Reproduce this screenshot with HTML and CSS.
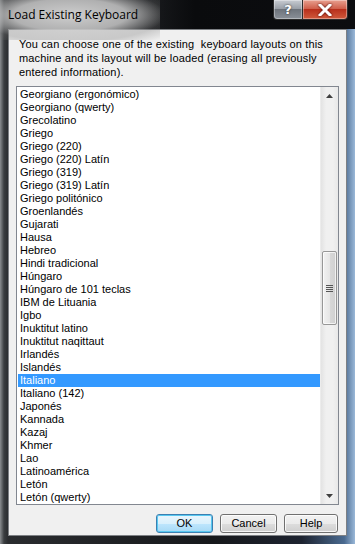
FILE: index.html
```html
<!DOCTYPE html>
<html>
<head>
<meta charset="utf-8">
<link rel="stylesheet" href="styles.css">
</head>
<body>
<div class="window">
  <div class="titlebar">
    <div class="glow"></div>
    <span class="title">Load Existing Keyboard</span>
    <div class="caption-btns">
      <div class="cap-btn help-cap">?</div>
      <div class="cap-btn close-cap">
        <svg width="14" height="12" viewBox="0 0 14 12"><path d="M2 1 L12 11 M12 1 L2 11" stroke="#fff" stroke-width="3" stroke-linecap="square"/></svg>
      </div>
    </div>
  </div>
  <div class="frame-row">
    <div class="client">
      <p class="intro">You can choose one of the existing&nbsp; keyboard layouts on this machine and its layout will be loaded (erasing all previously entered information).</p>
      <div class="listbox">
        <div class="items">
          <div class="item">Georgiano (ergonómico)</div>
          <div class="item">Georgiano (qwerty)</div>
          <div class="item">Grecolatino</div>
          <div class="item">Griego</div>
          <div class="item">Griego (220)</div>
          <div class="item">Griego (220) Latín</div>
          <div class="item">Griego (319)</div>
          <div class="item">Griego (319) Latín</div>
          <div class="item">Griego politónico</div>
          <div class="item">Groenlandés</div>
          <div class="item">Gujarati</div>
          <div class="item">Hausa</div>
          <div class="item">Hebreo</div>
          <div class="item">Hindi tradicional</div>
          <div class="item">Húngaro</div>
          <div class="item">Húngaro de 101 teclas</div>
          <div class="item">IBM de Lituania</div>
          <div class="item">Igbo</div>
          <div class="item">Inuktitut latino</div>
          <div class="item">Inuktitut naqittaut</div>
          <div class="item">Irlandés</div>
          <div class="item">Islandés</div>
          <div class="item selected">Italiano</div>
          <div class="item">Italiano (142)</div>
          <div class="item">Japonés</div>
          <div class="item">Kannada</div>
          <div class="item">Kazaj</div>
          <div class="item">Khmer</div>
          <div class="item">Lao</div>
          <div class="item">Latinoamérica</div>
          <div class="item">Letón</div>
          <div class="item">Letón (qwerty)</div>
        </div>
        <div class="scrollbar">
          <div class="arrow up"><svg width="7" height="4" viewBox="0 0 7 4"><path d="M0 4 L3.5 0 L7 4 Z" fill="#404040"/></svg></div>
          <div class="track">
            <div class="thumb">
              <div class="grip"><span></span><span></span><span></span><span></span></div>
            </div>
          </div>
          <div class="arrow down"><svg width="7" height="4" viewBox="0 0 7 4"><path d="M0 0 L3.5 4 L7 0 Z" fill="#404040"/></svg></div>
        </div>
      </div>
      <div class="buttons">
        <div class="btn default">OK</div>
        <div class="btn">Cancel</div>
        <div class="btn narrow">Help</div>
      </div>
    </div>
  </div>
</div>
</body>
</html>
```
FILE: styles.css
```css
html, body {
  margin: 0;
  padding: 0;
}
body {
  width: 355px;
  height: 544px;
  overflow: hidden;
  background: #1a1c20;
  font-family: "Liberation Sans", Arial, sans-serif;
}
.window {
  width: 355px;
  height: 544px;
  display: flex;
  flex-direction: column;
  background: linear-gradient(to right, #8a8d90 0px, #3a3d40 4px, #2a2c2f 8px, #16181b 60%, #1d2330 85%, #4a6a90 97%, #9ab8d8 100%);
}
.titlebar {
  position: relative;
  height: 29px;
  flex: none;
  background: linear-gradient(to right, rgba(0,0,0,0) 0, rgba(0,0,0,0) 40%, #0a0b0d 55%, #0c0d10 100%);
}
.glow {
  position: absolute;
  left: -20px;
  top: -10px;
  width: 180px;
  height: 50px;
  background: radial-gradient(ellipse at center, rgba(215,215,215,0.95) 0%, rgba(200,200,200,0.85) 45%, rgba(110,110,110,0.3) 75%, rgba(0,0,0,0) 100%);
}
.title {
  position: absolute;
  left: 8px;
  top: 6px;
  font-family: "Open Sans", "Noto Sans", sans-serif;
  font-size: 12px;
  color: #000;
  white-space: nowrap;
}
.caption-btns {
  position: absolute;
  right: 7px;
  top: 0;
  display: flex;
}
.cap-btn {
  height: 19px;
  border: 1px solid #2c2c2c;
  border-top: none;
  display: flex;
  align-items: center;
  justify-content: center;
  box-shadow: inset 0 0 0 1px rgba(255,255,255,0.35);
}
.help-cap {
  width: 28px;
  border-radius: 0 0 0 4px;
  background: linear-gradient(to bottom, #c8ccd2 0%, #9aa0a8 45%, #6e747c 50%, #8a9098 100%);
  color: #fff;
  font-family: "DejaVu Sans", sans-serif;
  font-weight: bold;
  font-size: 13px;
  text-shadow: 0 0 2px #222;
}
.close-cap {
  width: 44px;
  border-left: none;
  border-radius: 0 0 4px 0;
  background: linear-gradient(to bottom, #e8a090 0%, #d0604c 45%, #b8301c 50%, #d05a3c 100%);
}
.close-cap svg {
  filter: drop-shadow(0 0 1px #400);
}
.frame-row {
  flex: 1;
  display: flex;
  padding: 0 8px 8px 8px;
}
.client {
  flex: 1;
  background: #f0f0f0;
  border: 1px solid #7d8084;
  display: flex;
  flex-direction: column;
  padding: 7px 7px 0 7px;
}
.intro {
  margin: 0 0 7px 3px;
  font-size: 11px;
  line-height: 14px;
  letter-spacing: 0.15px;
  color: #000;
}
.listbox {
  height: 417px;
  border: 1px solid #828790;
  background: #fff;
  display: flex;
}
.items {
  flex: 1;
  padding: 1px 0 0 1px;
}
.item {
  height: 13px;
  line-height: 13px;
  font-size: 11px;
  padding-left: 2px;
  color: #000;
  white-space: nowrap;
}
.item.selected {
  background: #3399ff;
  color: #fff;
}
.scrollbar {
  width: 17px;
  display: flex;
  flex-direction: column;
  background: linear-gradient(to right, #e3e3e3, #f0f0f0 30%, #f0f0f0 70%, #e8e8e8);
  border-left: 1px solid #ececec;
}
.arrow {
  height: 17px;
  display: flex;
  align-items: center;
  justify-content: center;
}
.track {
  flex: 1;
  position: relative;
}
.thumb {
  position: absolute;
  left: 1px;
  right: 1px;
  top: 147px;
  height: 72px;
  border: 1px solid #979797;
  border-radius: 2px;
  background: linear-gradient(to right, #f2f2f2 0%, #e6e6e6 50%, #d8d8d8 51%, #d0d0d0 100%);
  box-shadow: inset 0 0 0 1px rgba(255,255,255,0.7);
  display: flex;
  align-items: center;
  justify-content: center;
}
.grip {
  display: flex;
  flex-direction: column;
  gap: 1px;
}
.grip span {
  display: block;
  width: 7px;
  height: 1px;
  background: #555;
}
.buttons {
  display: flex;
  justify-content: flex-end;
  gap: 7px;
  margin-top: 9px;
  padding-right: 1px;
}
.btn {
  width: 55px;
  height: 17px;
  border: 1px solid #707070;
  border-radius: 3px;
  background: linear-gradient(to bottom, #f2f2f2 0%, #ebebeb 50%, #dddddd 51%, #cfcfcf 100%);
  box-shadow: inset 0 0 0 1px rgba(255,255,255,0.8);
  font-size: 11px;
  line-height: 17px;
  text-align: center;
  color: #000;
}
.btn.narrow {
  width: 52px;
}
.btn.default {
  border-color: #3c7fb1;
  background: linear-gradient(to bottom, #eaf6fd 0%, #d9f0fc 50%, #bee6fd 51%, #a7d9f5 100%);
  box-shadow: inset 0 0 0 1px #58c8f0;
}
```
